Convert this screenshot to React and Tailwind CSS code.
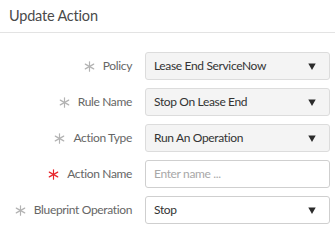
import React from "react";

const FIELDS = [
  { label: "Policy", value: "Lease End ServiceNow", kind: "disabled" },
  { label: "Rule Name", value: "Stop On Lease End", kind: "disabled" },
  { label: "Action Type", value: "Run An Operation", kind: "disabled" },
  { label: "Action Name", placeholder: "Enter name ...", kind: "input", required: true },
  { label: "Blueprint Operation", value: "Stop", kind: "select" },
];

function Star({ red }) {
  return (
    <svg width="11" height="11" viewBox="0 0 12 12" className="shrink-0">
      <g stroke={red ? "#e8262b" : "#b3b3b3"} strokeWidth="1.3" strokeLinecap="round">
        <line x1="6" y1="0.8" x2="6" y2="11.2" />
        <line x1="1.4" y1="3.4" x2="10.6" y2="8.6" />
        <line x1="1.4" y1="8.6" x2="10.6" y2="3.4" />
      </g>
    </svg>
  );
}

function Caret() {
  return (
    <svg width="8" height="7" viewBox="0 0 8 7" className="shrink-0">
      <path d="M0.3 0.4 H7.7 L4 6.9 Z" fill="#2b2b2b" />
    </svg>
  );
}

function Field({ f }) {
  if (f.kind === "input") {
    return (
      <div className="w-[185px] h-7 border border-[#cfcfcf] rounded-[3px] bg-white flex items-center px-[8px] text-[12px] tracking-[-0.35px] text-[#a8a8a8]">
        {f.placeholder}
      </div>
    );
  }
  const bg = f.kind === "disabled" ? "bg-[#f4f4f4] border-[#dcdcdc]" : "bg-white border-[#cfcfcf]";
  return (
    <div className={`w-[185px] h-7 border rounded-[3px] flex items-center justify-between pl-[8px] pr-[13px] text-[12px] tracking-[-0.35px] text-[#333] ${bg}`}>
      <span>{f.value}</span>
      <Caret />
    </div>
  );
}

export default function App() {
  return (
    <div className="w-[335px] h-[234px] bg-white font-['Lato','Noto_Sans',sans-serif] overflow-hidden">
      <div className="h-[33px] border-b border-[#e3e3e3] flex items-center px-[9px] text-[14.5px] tracking-[-0.2px] text-[#4a4a4a]">
        Update Action
      </div>
      <div className="pt-[19px] flex flex-col gap-2">
        {FIELDS.map((f) => (
          <div key={f.label} className="flex items-center h-7">
            <div className="w-[132px] flex items-center justify-end gap-[8px] text-[12px] tracking-[-0.35px] text-[#666] whitespace-nowrap">
              <Star red={f.required} />
              <span>{f.label}</span>
            </div>
            <div className="ml-[13px]">
              <Field f={f} />
            </div>
          </div>
        ))}
      </div>
    </div>
  );
}
